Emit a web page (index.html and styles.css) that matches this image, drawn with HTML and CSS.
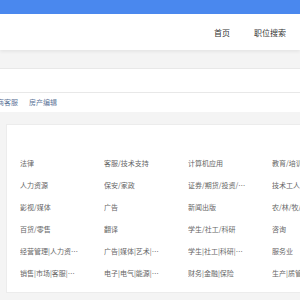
FILE: index.html
```html
<!DOCTYPE html>
<html lang="zh-CN">
<head>
    <meta charset="UTF-8">
    <meta name="viewport" content="width=device-width, initial-scale=1.0">
    <title>职位搜索</title>
    <link rel="stylesheet" href="styles.css">
</head>
<body>
    <div class="topbar"></div>
    <div class="header">
        <nav class="nav">
            <a href="#">首页</a>
            <a href="#">职位搜索</a>
        </nav>
    </div>
    <div class="searchband"></div>
    <div class="crumbs">
        <a href="#">电商客服</a>
        <a href="#">房产编辑</a>
    </div>
    <div class="card">
        <ul class="cats">
            <li>法律</li>
            <li>客服/技术支持</li>
            <li>计算机应用</li>
            <li>教育/培训</li>
            <li>人力资源</li>
            <li>保安/家政</li>
            <li>证券/期货/投资/银行</li>
            <li>技术工人</li>
            <li>影视/媒体</li>
            <li>广告</li>
            <li>新闻出版</li>
            <li>农/林/牧/渔</li>
            <li>百货/零售</li>
            <li>翻译</li>
            <li>学生/社工/科研</li>
            <li>咨询</li>
            <li>经营管理|人力资源|行政</li>
            <li>广告|媒体|艺术|设计</li>
            <li>学生|社工|科研|公益</li>
            <li>服务业</li>
            <li>销售|市场|客服|贸易</li>
            <li>电子|电气|能源|化工</li>
            <li>财务|金融|保险</li>
            <li>生产|质管|物流</li>
        </ul>
    </div>
</body>
</html>
```

FILE: styles.css
```css
body {
    margin: 0;
    background-color: #f4f4f4;
    font-family: "Noto Sans CJK SC", "Noto Sans", sans-serif;
    overflow: hidden;
}
a {
    text-decoration: none;
}
.topbar {
    height: 14px;
    background-color: #4a88ee;
}
.header {
    height: 36px;
    background-color: #ffffff;
    box-shadow: 0 2px 3px rgba(0, 0, 0, 0.06);
    display: flex;
    justify-content: flex-end;
    align-items: center;
    padding-right: 14px;
}
.nav {
    display: flex;
    gap: 24px;
}
.nav a {
    color: #333333;
    font-size: 8px;
}
.searchband {
    margin-top: 18px;
    height: 23px;
    background-color: #ffffff;
    border-top: 1px solid #e8e8e8;
    border-bottom: 1px solid #e8e8e8;
}
.crumbs {
    height: 17px;
    padding-bottom: 2px;
    background-color: #ffffff;
    display: flex;
    align-items: center;
    gap: 11px;
    margin-left: -10px;
}
.crumbs a {
    color: #5d7599;
    font-size: 7px;
}
.card {
    margin: 12px 0 0 6px;
    height: 167px;
    background-color: #ffffff;
    border: 1px solid #ececec;
    border-right: none;
}
.cats {
    list-style: none;
    margin: 0;
    padding: 33px 0 0 13px;
    display: grid;
    grid-template-columns: repeat(4, 84px);
    grid-auto-rows: 22px;
}
.cats li {
    width: 60px;
    font-size: 7px;
    color: #666666;
    white-space: nowrap;
    overflow: hidden;
    text-overflow: ellipsis;
}
```
